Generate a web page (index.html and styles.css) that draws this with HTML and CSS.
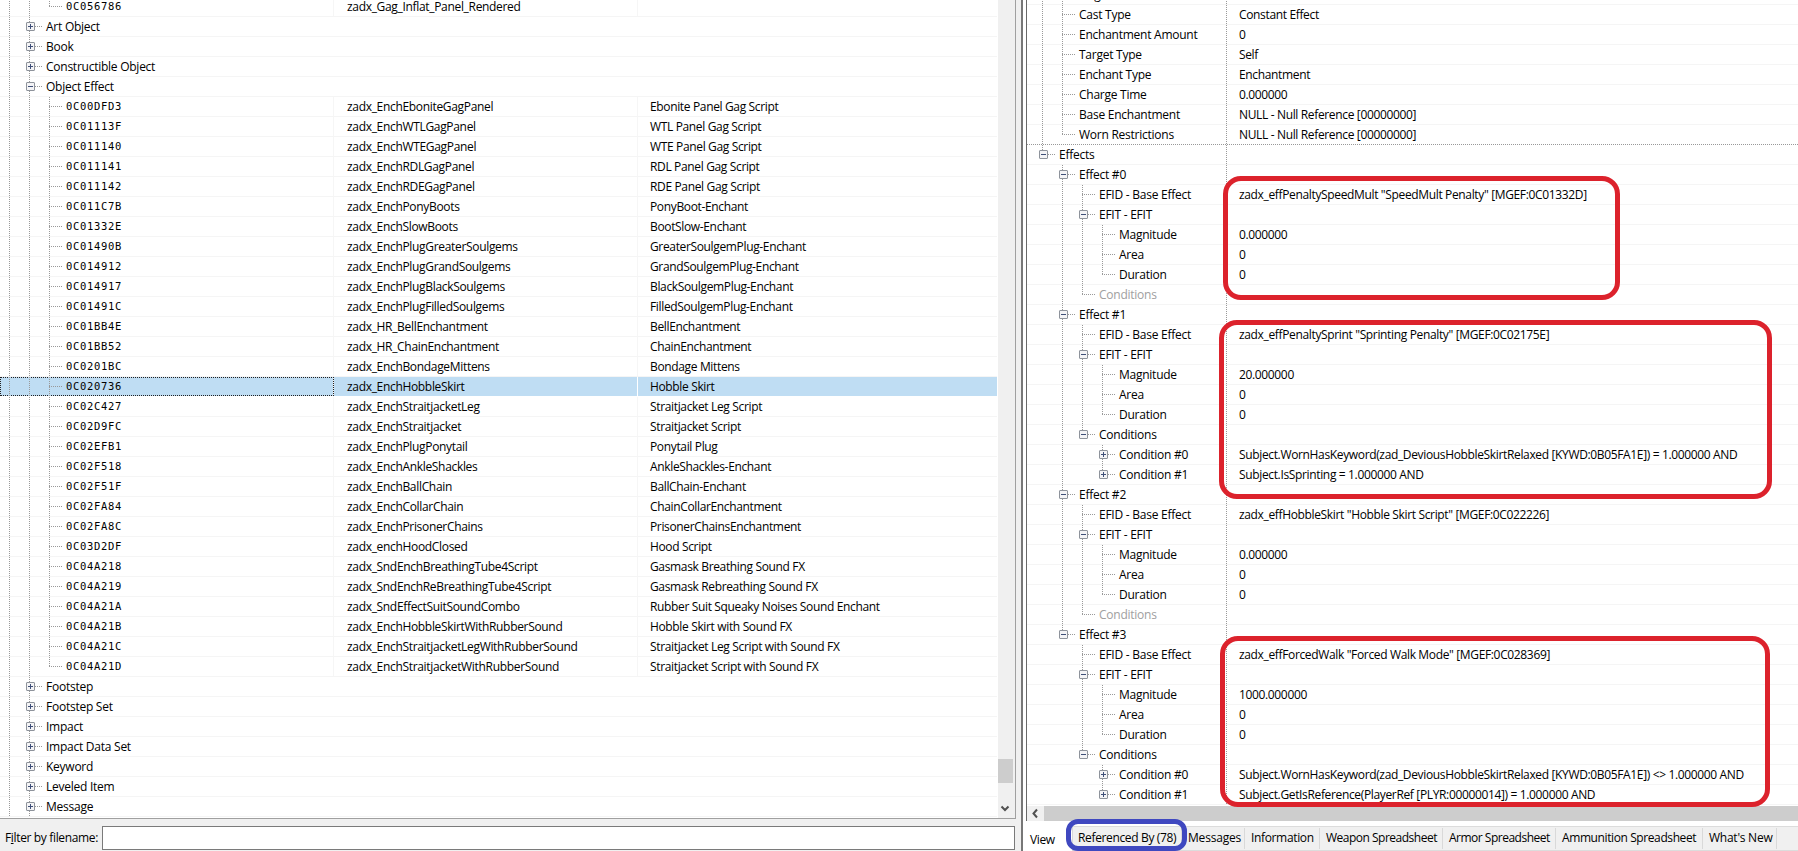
FILE: index.html
```html
<!DOCTYPE html>
<html lang="en">
<head>
    <meta charset="UTF-8">
    <title>Object Effect</title>
    <link rel="stylesheet" href="styles.css">
</head>
<body>
    <div class="window">
        <div class="left">
            <div class="tree-box">
                <div class="tree" id="records"></div>
                <div class="vscroll">
                    <div class="thumb"></div>
                    <svg class="down" width="10" height="8" viewBox="0 0 10 8"><path d="M1.5 1.5 L5 5 L8.5 1.5" fill="none" stroke="#505050" stroke-width="2"/></svg>
                </div>
            </div>
            <div class="filter">
                <label for="filename">F<u>i</u>lter by filename:</label>
                <input type="text" id="filename">
            </div>
        </div>

        <div class="right">
            <div class="view">
                <div class="tree" id="details"></div>
                <div class="hscroll">
                    <svg width="17" height="15" viewBox="0 0 17 15"><path d="M10 3.5 L6.5 7.5 L10 11.5" fill="none" stroke="#505050" stroke-width="2"/></svg>
                    <div class="thumb"></div>
                </div>
            </div>
            <div class="tabs">
                <div class="tab active">View</div>
                <div class="tab tab-ref">Referenced By (78)</div>
                <div class="tab tab-msg">Messages</div>
                <div class="tab tab-info">Information</div>
                <div class="tab tab-weapon">Weapon Spreadsheet</div>
                <div class="tab tab-armor">Armor Spreadsheet</div>
                <div class="tab tab-ammo">Ammunition Spreadsheet</div>
                <div class="tab tab-new">What's New</div>
            </div>
        </div>

        <div class="mark mark-speed"></div>
        <div class="mark mark-sprint"></div>
        <div class="mark mark-walk"></div>
        <div class="mark mark-tab"></div>
    </div>
    <script src="script.js"></script>
</body>
</html>
```
FILE: styles.css
```css
* {
    box-sizing: border-box;
}

body {
    margin: 0;
    height: 851px;
    overflow: hidden;
    background-color: #f0f0f0;
    font-family: "Open Sans", "Noto Sans", sans-serif;
    font-size: 12px;
    letter-spacing: -0.35px;
    color: #000;
}

.window {
    position: relative;
    display: flex;
    height: 851px;
    overflow: hidden;
}

/* left side */
.left {
    width: 1021px;
    display: flex;
    flex-direction: column;
}

.tree-box {
    display: flex;
    width: 1016px;
    height: 819px;
    border-right: 1px solid #a0a0a0;
    border-bottom: 1px solid #a0a0a0;
    overflow: hidden;
}

.tree {
    flex: 1;
    background-color: #fff;
    overflow: hidden;
}

#records {
    border-right: 1px solid #fff;
}

#records .row:first-child {
    margin-top: -3px;
}

.row {
    display: flex;
    height: 20px;
    line-height: 20px;
    border-bottom: 1px solid #f5f5f5;
    white-space: pre;
}

.name {
    display: flex;
    flex: none;
    height: 19px;
}

#records .name {
    width: 334px;
}

.leaf .name,
.leaf .edid {
    border-right: 1px solid #f6f6f6;
}

.edid {
    width: 304px;
    height: 19px;
    flex: none;
    padding-left: 13px;
    letter-spacing: -0.32px;
}

.full {
    flex: 1;
    height: 19px;
    padding-left: 12px;
}

.label {
    padding-left: 6px;
    letter-spacing: -0.25px;
}

.formid {
    font-family: "DejaVu Sans Mono", monospace;
    font-size: 10.5px;
    letter-spacing: 0.68px;
    line-height: 19px;
}

.selected {
    border-bottom-color: #fff;
}

.selected .name,
.selected .edid,
.selected .full {
    background-color: #bfddf3;
}

.selected .name {
    outline: 1px dotted #222;
    outline-offset: -1px;
}

.selected .edid {
    border-right-color: #fff;
}

/* tree lines */
.guide {
    position: relative;
    flex: none;
    width: 20px;
    height: 20px;
}

.line::before,
.last::before {
    content: "";
    position: absolute;
    left: 9px;
    top: 0;
    width: 1px;
    height: 20px;
    background: repeating-linear-gradient(#999 0 1px, transparent 1px 2px);
}

.last::before {
    height: 10px;
}

.branch::after {
    content: "";
    position: absolute;
    left: 9px;
    top: 9px;
    width: 13px;
    height: 1px;
    background: repeating-linear-gradient(90deg, #999 0 1px, transparent 1px 2px);
}

.node {
    position: absolute;
    left: 6px;
    top: 5px;
    z-index: 1;
}

/* middle bar and right side */
.right {
    flex: 1;
    display: flex;
    flex-direction: column;
    border-left: 2px solid #777;
    background-color: #fff;
}

.view {
    display: flex;
    flex-direction: column;
    height: 821px;
    margin-left: 3px;
    border-left: 1px solid #696969;
}

#details {
    height: 806px;
    flex: none;
}

#details .row:first-child {
    margin-top: -15px;
}

#details .name {
    width: 200px;
    padding-left: 6px;
    background: repeating-linear-gradient(#999 0 1px, transparent 1px 2px) right / 1px 20px no-repeat;
    height: 20px;
}

.value {
    padding-left: 12px;
}

.disabled {
    color: #a0a0a0;
}

.divider {
    border-bottom: none;
    background: repeating-linear-gradient(90deg, #999 0 1px, #fff 1px 2px) bottom / 100% 1px no-repeat;
}

.vscroll {
    width: 17px;
    background-color: #f0f0f0;
    position: relative;
}

.vscroll .thumb {
    width: 15px;
    height: 24px;
    margin-top: 759px;
    background-color: #cdcdcd;
}

.vscroll .down {
    position: absolute;
    left: 2px;
    bottom: 5px;
}

.hscroll {
    display: flex;
    height: 15px;
    background-color: #f0f0f0;
}

.hscroll .thumb {
    flex: 1;
    background-color: #cdcdcd;
}

/* bottom strip */
.filter {
    display: flex;
    padding: 7px 0 0 5px;
}

.filter label {
    width: 97px;
    line-height: 23px;
}

.filter input {
    width: 913px;
    height: 24px;
    border: 1px solid #7a7a7a;
    background-color: #fff;
}

.tabs {
    display: flex;
    height: 25px;
    margin-top: 5px;
    background-color: #f0f0f0;
    border-top: 1px solid #dcdcdc;
    border-bottom: 1px solid #dcdcdc;
}

.tab {
    height: 21px;
    margin-top: 1px;
    line-height: 20px;
    padding-left: 6px;
    border-right: 1px solid #d9d9d9;
    white-space: nowrap;
}

.tab.active {
    width: 50px;
    height: 25px;
    margin-top: -1px;
    padding-left: 7px;
    line-height: 28px;
    background-color: #fff;
}

.tab-ref { width: 109px; padding-left: 5px; }
.tab-msg { width: 63px; letter-spacing: -0.2px; }
.tab-info { width: 75px; }
.tab-weapon { width: 123px; letter-spacing: -0.5px; }
.tab-armor { width: 113px; letter-spacing: -0.5px; }
.tab-ammo { width: 147px; letter-spacing: -0.4px; }
.tab-new { width: 74px; letter-spacing: -0.25px; }

/* pen marks over the window */
.mark {
    position: absolute;
    border: 5px solid #dc222c;
    border-radius: 18px;
}

.mark-speed {
    left: 1223px;
    top: 176px;
    width: 397px;
    height: 124px;
}

.mark-sprint {
    left: 1219px;
    top: 320px;
    width: 553px;
    height: 179px;
}

.mark-walk {
    left: 1220px;
    top: 636px;
    width: 550px;
    height: 171px;
}

.mark-tab {
    left: 1066px;
    top: 819px;
    width: 121px;
    height: 32px;
    border-color: #3f48c0;
    border-radius: 12px;
}
```
FILE: script.js
```js
// guides: "|" line, "+" branch, "L" last branch, " " empty,
// "p" closed node, "m" open node, "P" / "M" the same at the end of a line
var records = [
    ["||L", "0C056786", "zadx_Gag_Inflat_Panel_Rendered", ""],
    ["|p", "Art Object"],
    ["|p", "Book"],
    ["|p", "Constructible Object"],
    ["|m", "Object Effect"],
    ["||+", "0C00DFD3", "zadx_EnchEboniteGagPanel", "Ebonite Panel Gag Script"],
    ["||+", "0C01113F", "zadx_EnchWTLGagPanel", "WTL Panel Gag Script"],
    ["||+", "0C011140", "zadx_EnchWTEGagPanel", "WTE Panel Gag Script"],
    ["||+", "0C011141", "zadx_EnchRDLGagPanel", "RDL Panel Gag Script"],
    ["||+", "0C011142", "zadx_EnchRDEGagPanel", "RDE Panel Gag Script"],
    ["||+", "0C011C7B", "zadx_EnchPonyBoots", "PonyBoot-Enchant"],
    ["||+", "0C01332E", "zadx_EnchSlowBoots", "BootSlow-Enchant"],
    ["||+", "0C01490B", "zadx_EnchPlugGreaterSoulgems", "GreaterSoulgemPlug-Enchant"],
    ["||+", "0C014912", "zadx_EnchPlugGrandSoulgems", "GrandSoulgemPlug-Enchant"],
    ["||+", "0C014917", "zadx_EnchPlugBlackSoulgems", "BlackSoulgemPlug-Enchant"],
    ["||+", "0C01491C", "zadx_EnchPlugFilledSoulgems", "FilledSoulgemPlug-Enchant"],
    ["||+", "0C01BB4E", "zadx_HR_BellEnchantment", "BellEnchantment"],
    ["||+", "0C01BB52", "zadx_HR_ChainEnchantment", "ChainEnchantment"],
    ["||+", "0C0201BC", "zadx_EnchBondageMittens", "Bondage Mittens"],
    ["||+", "0C020736", "zadx_EnchHobbleSkirt", "Hobble Skirt", "selected"],
    ["||+", "0C02C427", "zadx_EnchStraitjacketLeg", "Straitjacket Leg Script"],
    ["||+", "0C02D9FC", "zadx_EnchStraitjacket", "Straitjacket Script"],
    ["||+", "0C02EFB1", "zadx_EnchPlugPonytail", "Ponytail Plug"],
    ["||+", "0C02F518", "zadx_EnchAnkleShackles", "AnkleShackles-Enchant"],
    ["||+", "0C02F51F", "zadx_EnchBallChain", "BallChain-Enchant"],
    ["||+", "0C02FA84", "zadx_EnchCollarChain", "ChainCollarEnchantment"],
    ["||+", "0C02FA8C", "zadx_EnchPrisonerChains", "PrisonerChainsEnchantment"],
    ["||+", "0C03D2DF", "zadx_enchHoodClosed", "Hood Script"],
    ["||+", "0C04A218", "zadx_SndEnchBreathingTube4Script", "Gasmask Breathing Sound FX"],
    ["||+", "0C04A219", "zadx_SndEnchReBreathingTube4Script", "Gasmask Rebreathing Sound FX"],
    ["||+", "0C04A21A", "zadx_SndEffectSuitSoundCombo", "Rubber Suit Squeaky Noises Sound Enchant"],
    ["||+", "0C04A21B", "zadx_EnchHobbleSkirtWithRubberSound", "Hobble Skirt with Sound FX"],
    ["||+", "0C04A21C", "zadx_EnchStraitjacketLegWithRubberSound", "Straitjacket Leg Script with Sound FX"],
    ["||L", "0C04A21D", "zadx_EnchStraitjacketWithRubberSound", "Straitjacket Script with Sound FX"],
    ["|p", "Footstep"],
    ["|p", "Footstep Set"],
    ["|p", "Impact"],
    ["|p", "Impact Data Set"],
    ["|p", "Keyword"],
    ["|p", "Leveled Item"],
    ["|p", "Message"]
];

var details = [
    ["|+", "Flags", ""],
    ["|+", "Cast Type", "Constant Effect"],
    ["|+", "Enchantment Amount", "0"],
    ["|+", "Target Type", "Self"],
    ["|+", "Enchant Type", "Enchantment"],
    ["|+", "Charge Time", "0.000000"],
    ["|+", "Base Enchantment", "NULL - Null Reference [00000000]"],
    ["|L", "Worn Restrictions", "NULL - Null Reference [00000000]", "divider"],
    ["M", "Effects", ""],
    [" m", "Effect #0", ""],
    [" |+", "EFID - Base Effect", "zadx_effPenaltySpeedMult \"SpeedMult Penalty\" [MGEF:0C01332D]"],
    [" |m", "EFIT - EFIT", ""],
    [" ||+", "Magnitude", "0.000000"],
    [" ||+", "Area", "0"],
    [" ||L", "Duration", "0"],
    [" |L", "Conditions", "", "disabled"],
    [" m", "Effect #1", ""],
    [" |+", "EFID - Base Effect", "zadx_effPenaltySprint \"Sprinting Penalty\" [MGEF:0C02175E]"],
    [" |m", "EFIT - EFIT", ""],
    [" ||+", "Magnitude", "20.000000"],
    [" ||+", "Area", "0"],
    [" ||L", "Duration", "0"],
    [" |M", "Conditions", ""],
    [" | p", "Condition #0", "Subject.WornHasKeyword(zad_DeviousHobbleSkirtRelaxed [KYWD:0B05FA1E]) = 1.000000 AND"],
    [" | P", "Condition #1", "Subject.IsSprinting = 1.000000 AND"],
    [" m", "Effect #2", ""],
    [" |+", "EFID - Base Effect", "zadx_effHobbleSkirt \"Hobble Skirt Script\" [MGEF:0C022226]"],
    [" |m", "EFIT - EFIT", ""],
    [" ||+", "Magnitude", "0.000000"],
    [" ||+", "Area", "0"],
    [" ||L", "Duration", "0"],
    [" |L", "Conditions", "", "disabled"],
    [" M", "Effect #3", ""],
    ["  +", "EFID - Base Effect", "zadx_effForcedWalk \"Forced Walk Mode\" [MGEF:0C028369]"],
    ["  m", "EFIT - EFIT", ""],
    ["  |+", "Magnitude", "1000.000000"],
    ["  |+", "Area", "0"],
    ["  |L", "Duration", "0"],
    ["  M", "Conditions", ""],
    ["   p", "Condition #0", "Subject.WornHasKeyword(zad_DeviousHobbleSkirtRelaxed [KYWD:0B05FA1E]) <> 1.000000 AND"],
    ["   P", "Condition #1", "Subject.GetIsReference(PlayerRef [PLYR:00000014]) = 1.000000 AND"]
];

var guideClass = {
    "|": "line", "+": "line branch", "L": "last branch", " ": "",
    "p": "line branch", "m": "line branch", "P": "last branch", "M": "last branch"
};

function span(className, text) {
    var el = document.createElement("span");
    el.className = className;
    el.textContent = text || "";
    return el;
}

function nodeIcon(open) {
    return '<svg class="node" width="9" height="9" viewBox="0 0 9 9">' +
        '<rect x="0.5" y="0.5" width="8" height="8" rx="0.5" fill="#f4f4f6" stroke="#8e939b"/>' +
        '<path d="M2 4.5H7' + (open ? '' : 'M4.5 2V7') + '" stroke="#3f5078"/></svg>';
}

function nameCell(guides, text, labelClass) {
    var cell = span("name");
    guides.split("").forEach(function (g) {
        var guide = span("guide " + guideClass[g]);
        if ("pPmM".indexOf(g) >= 0) {
            guide.innerHTML = nodeIcon(g.toLowerCase() === "m");
        }
        cell.appendChild(guide);
    });
    cell.appendChild(span(labelClass, text));
    return cell;
}

records.forEach(function (r) {
    var leaf = r.length > 2;
    var row = document.createElement("div");
    row.className = "row" + (leaf ? " leaf" : "") + (r[4] ? " " + r[4] : "");
    row.appendChild(nameCell(r[0], r[1], leaf ? "label formid" : "label"));
    if (leaf) {
        row.appendChild(span("edid", r[2]));
        row.appendChild(span("full", r[3]));
    }
    document.getElementById("records").appendChild(row);
});

details.forEach(function (d) {
    var row = document.createElement("div");
    row.className = "row" + (d[3] ? " " + d[3] : "");
    row.appendChild(nameCell(d[0], d[1], "label"));
    row.appendChild(span("value", d[2]));
    document.getElementById("details").appendChild(row);
});
```
